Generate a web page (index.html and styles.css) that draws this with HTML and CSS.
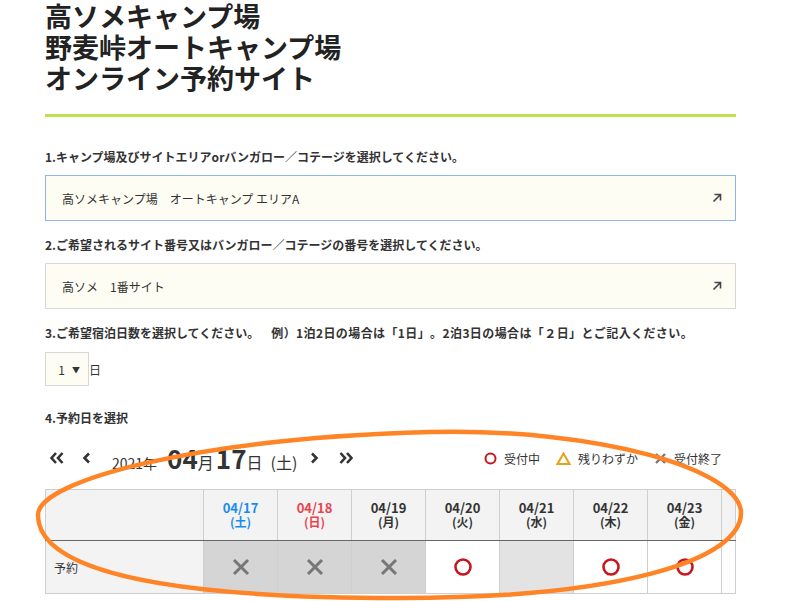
FILE: index.html
```html
<!DOCTYPE html>
<html lang="ja">
<head>
    <meta charset="UTF-8">
    <title>高ソメキャンプ場 オンライン予約サイト</title>
    <link rel="stylesheet" href="styles.css">
</head>
<body>
    <div class="page">
        <h1 class="site-title">高ソメキャンプ場<br>野麦峠オートキャンプ場<br>オンライン予約サイト</h1>
        <div class="title-rule"></div>

        <p class="step">1.キャンプ場及びサイトエリアorバンガロー／コテージを選択してください。</p>
        <div class="select-box active">
            <span>高ソメキャンプ場　オートキャンプ エリアA</span>
            <svg class="open-icon" width="10" height="10" viewBox="0 0 10 10"><path d="M2.5 1.5h6v6M8.5 1.5L1.5 8.5" fill="none" stroke="#444" stroke-width="1.6"/></svg>
        </div>

        <p class="step">2.ご希望されるサイト番号又はバンガロー／コテージの番号を選択してください。</p>
        <div class="select-box">
            <span>高ソメ　1番サイト</span>
            <svg class="open-icon" width="10" height="10" viewBox="0 0 10 10"><path d="M2.5 1.5h6v6M8.5 1.5L1.5 8.5" fill="none" stroke="#444" stroke-width="1.6"/></svg>
        </div>

        <p class="step">3.ご希望宿泊日数を選択してください。　<span class="example">例）1泊2日の場合は「1日」。2泊3日の場合は「２日」とご記入ください。</span></p>
        <div class="nights">
            <div class="nights-select">1 <span class="caret">▼</span></div>
            <span>日</span>
        </div>

        <p class="step step-date">4.予約日を選択</p>
        <div class="cal-bar">
            <div class="cal-nav">
                <svg width="14" height="14" viewBox="0 0 14 14"><path d="M6 2L1.5 7 6 12M12.5 2L8 7l4.5 5" fill="none" stroke="#333" stroke-width="2.6"/></svg>
                <svg class="single" width="10" height="14" viewBox="0 0 10 14"><path d="M7 2.5L2.5 7 7 11.5" fill="none" stroke="#333" stroke-width="2.6"/></svg>
                <span class="cal-year">2021年</span>
                <span class="cal-big">04</span><span class="cal-unit">月</span><span class="cal-big">17</span><span class="cal-unit">日</span>
                <span class="cal-week">(土)</span>
                <svg class="single" width="10" height="14" viewBox="0 0 10 14"><path d="M3 2.5L7.5 7 3 11.5" fill="none" stroke="#333" stroke-width="2.6"/></svg>
                <svg width="14" height="14" viewBox="0 0 14 14"><path d="M1.5 2L6 7l-4.5 5M8 2l4.5 5L8 12" fill="none" stroke="#333" stroke-width="2.6"/></svg>
            </div>
            <div class="legend">
                <span class="legend-item"><svg width="13" height="13" viewBox="0 0 13 13"><circle cx="6.5" cy="6.5" r="5" fill="none" stroke="#c8161e" stroke-width="2"/></svg>受付中</span>
                <span class="legend-item"><svg width="15" height="13" viewBox="0 0 15 13"><path d="M7.5 1.5L13.5 12H1.5Z" fill="none" stroke="#e6a21c" stroke-width="2"/></svg>残りわずか</span>
                <span class="legend-item"><svg width="13" height="13" viewBox="0 0 13 13"><path d="M2 2l9 9M11 2l-9 9" stroke="#777" stroke-width="2.4"/></svg>受付終了</span>
            </div>
        </div>

        <table class="calendar">
            <tr class="head">
                <th class="row-title"></th>
                <th class="sat">04/17<br><small>(土)</small></th>
                <th class="sun">04/18<br><small>(日)</small></th>
                <th>04/19<br><small>(月)</small></th>
                <th>04/20<br><small>(火)</small></th>
                <th>04/21<br><small>(水)</small></th>
                <th>04/22<br><small>(木)</small></th>
                <th>04/23<br><small>(金)</small></th>
                <th class="rest"></th>
            </tr>
            <tr class="body">
                <td class="row-title">予約</td>
                <td class="closed"><svg width="20" height="20" viewBox="0 0 20 20"><path d="M3 3l14 14M17 3L3 17" stroke="#777" stroke-width="3"/></svg></td>
                <td class="closed"><svg width="20" height="20" viewBox="0 0 20 20"><path d="M3 3l14 14M17 3L3 17" stroke="#777" stroke-width="3"/></svg></td>
                <td class="closed"><svg width="20" height="20" viewBox="0 0 20 20"><path d="M3 3l14 14M17 3L3 17" stroke="#777" stroke-width="3"/></svg></td>
                <td><svg width="20" height="20" viewBox="0 0 20 20"><circle cx="10" cy="10" r="7.5" fill="none" stroke="#c8161e" stroke-width="2.6"/></svg></td>
                <td class="blank"></td>
                <td><svg width="20" height="20" viewBox="0 0 20 20"><circle cx="10" cy="10" r="7.5" fill="none" stroke="#c8161e" stroke-width="2.6"/></svg></td>
                <td><svg width="20" height="20" viewBox="0 0 20 20"><circle cx="10" cy="10" r="7.5" fill="none" stroke="#c8161e" stroke-width="2.6"/></svg></td>
                <td class="rest"></td>
            </tr>
        </table>
    </div>

    <!-- hand-drawn highlight over the calendar -->
    <svg class="marker" width="800" height="601" viewBox="0 0 800 601">
        <path d="M38 515C38 480 200 438 430 432C600 428 741 470 741 513C741 560 620 598 400 598C120 598 38 560 38 515Z" fill="none" stroke="#ff8426" stroke-width="4.5"/>
    </svg>
</body>
</html>
```

FILE: styles.css
```css
* {
    box-sizing: border-box;
}

body {
    margin: 0;
    background: #fff;
    color: #333;
    font-family: "Noto Sans CJK JP", "Noto Sans", sans-serif;
    text-spacing-trim: space-all;
    position: relative;
    width: 800px;
    height: 601px;
    overflow: hidden;
}

.page {
    width: 736px;
    padding-left: 45px;
}

.site-title {
    margin: 0;
    font-size: 27px;
    line-height: 31px;
    font-weight: bold;
    color: #222;
}

.title-rule {
    height: 3px;
    margin-top: 21px;
    background: #bde14f;
}

.step {
    margin: 31px 0 0;
    font-size: 12px;
    line-height: 18px;
    font-weight: bold;
    color: #333;
}

.example {
    letter-spacing: 0.4px;
}

.select-box {
    display: flex;
    align-items: center;
    justify-content: space-between;
    height: 46px;
    margin: 9px 0 0;
    padding: 0 13px 0 16px;
    background: #fdfdf4;
    border: 1px solid #d8d8d8;
    font-size: 12px;
    color: #333;
}

.select-box.active {
    border-color: #8ab6e8;
}

.select-box + .step {
    margin-top: 15px;
}

.nights {
    display: flex;
    align-items: center;
    margin-top: 10px;
    font-size: 12px;
}

.nights-select {
    width: 44px;
    height: 34px;
    display: flex;
    align-items: center;
    justify-content: flex-end;
    gap: 7px;
    padding-right: 8px;
    background: #fdfdf4;
    border: 1px solid #d8d8d8;
    font-size: 12px;
}

.caret {
    font-size: 8px;
}

.step-date {
    margin-top: 23px;
}

.cal-bar {
    display: flex;
    align-items: center;
    justify-content: space-between;
    height: 32px;
    margin-top: 15px;
    padding-right: 14px;
}

.cal-nav {
    display: flex;
    align-items: baseline;
    padding-left: 5px;
    color: #333;
}

.cal-nav svg {
    margin-right: 18px;
    align-self: center;
}

.cal-nav .single {
    margin-right: 20px;
}

.cal-year {
    font-size: 14px;
    margin-right: 10px;
}

.cal-big {
    font-size: 26px;
    font-weight: bold;
    line-height: 30px;
}

.cal-unit {
    font-size: 16px;
    margin-right: 2px;
}

.cal-week {
    font-size: 16px;
    margin: 0 12px 0 6px;
}

.legend {
    display: flex;
    align-items: center;
    gap: 16px;
    font-size: 12px;
    color: #333;
}

.legend-item {
    display: flex;
    align-items: center;
    gap: 7px;
}

.calendar {
    width: 691px;
    margin-top: 15px;
    border-collapse: collapse;
    table-layout: fixed;
}

.calendar th,
.calendar td {
    border: 1px solid #cfcfcf;
    padding: 0;
    text-align: center;
}

.calendar .head th {
    height: 51px;
    background: #f3f3f3;
    font-size: 13px;
    line-height: 14px;
    font-weight: bold;
    color: #333;
    width: 74px;
    border-bottom: 1px solid #666;
}

.calendar th small {
    font-size: 12px;
}

.calendar .head th.row-title {
    width: 158px;
}

.calendar .head th.rest {
    width: 14px;
}

.calendar .head th.sat {
    color: #1a8cf0;
}

.calendar .head th.sun {
    color: #e8434f;
}

.calendar .body td {
    height: 53px;
    background: #fff;
}

.calendar .body td svg {
    display: block;
    margin: 0 auto;
}

.calendar td.row-title {
    background: #f3f3f3;
    text-align: left;
    padding-left: 8px;
    font-size: 12px;
}

.calendar td.closed {
    background: #d5d5d5;
}

.calendar td.blank {
    background: #e3e3e3;
}

.marker {
    position: absolute;
    top: 0;
    left: 0;
    pointer-events: none;
}
```
